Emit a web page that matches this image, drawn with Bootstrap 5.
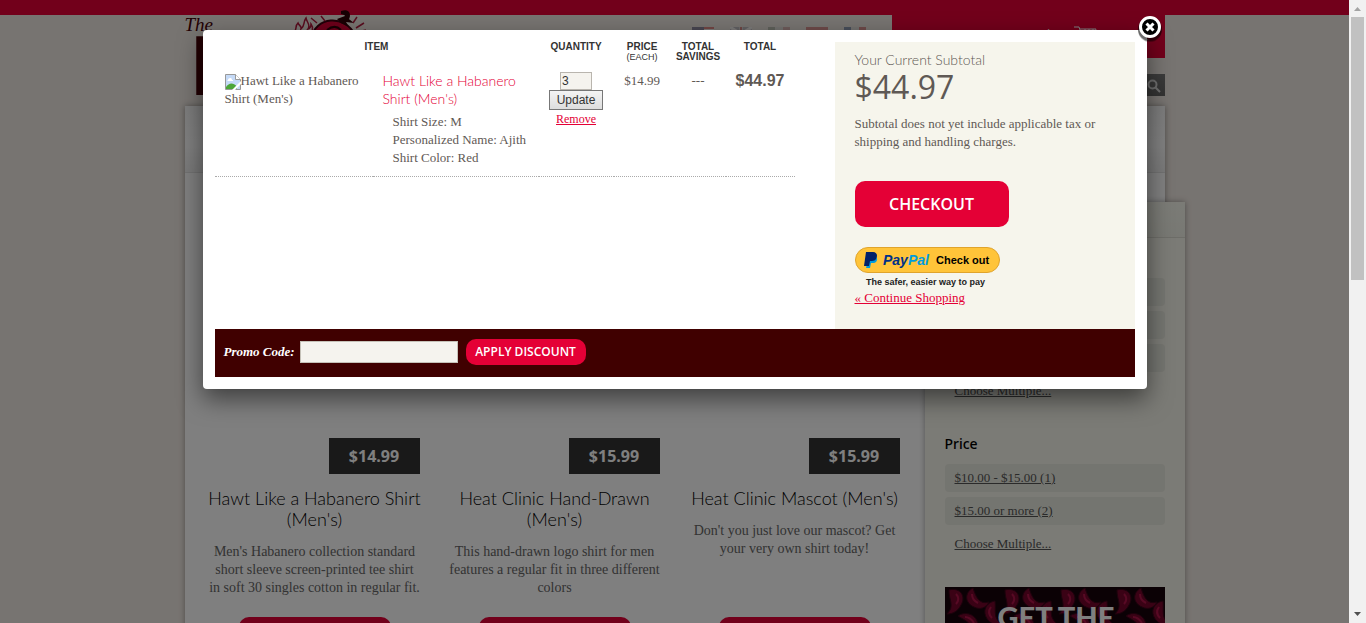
<!DOCTYPE html>
<html lang="en">
<head>
<meta charset="utf-8">
<meta name="viewport" content="width=device-width, initial-scale=1">
<title>The Heat Clinic - Cart</title>
<link href="https://cdn.jsdelivr.net/npm/bootstrap@5.3.0/dist/css/bootstrap.min.css" rel="stylesheet">
<script defer src="https://cdn.jsdelivr.net/npm/bootstrap@5.3.0/dist/js/bootstrap.bundle.min.js"></script>
<style>
:root{--red:#e40036;--serif:"Liberation Serif",serif;--sans:"Open Sans","Noto Sans",sans-serif;--light:Lato,"Open Sans",sans-serif;--arial:"Liberation Sans",sans-serif}
body{font:13px/18px var(--serif);color:#5f5955;background:#efeae5}
.viewport{height:100vh;overflow:hidden}
.site{min-width:0;overflow:hidden;position:relative;background:#efe8e2}
.topbar{height:15px;background:var(--red)}
.wrap{width:100%;max-width:980px;margin:0 auto}
/* header */
.masthead{height:91px}
.brand{color:#450006;text-decoration:none;position:relative;display:block;width:190px}
.brand-the{font:italic 19px/20px var(--serif);display:block}
.brand-heat{font:bold 86px/60px var(--arial);display:block;padding-left:6px}
.brand svg{position:absolute;left:106px;top:-6px}
.flags{gap:16px;padding:12px 26px 0 0}
.flags svg{opacity:.5}
.account{width:273px;height:43px;background:var(--red);font:15px/20px var(--sans);padding:8px 16px 14px}
.account a{color:#fff;text-decoration:none}
.find{margin-top:16px;width:273px;height:22px}
.find input{border:0;background:#f5f3ee;border-radius:0}
.find button{width:24px;height:22px;border:0;background:linear-gradient(#777,#666)}
/* page body */
.sheet{background:#fff;box-shadow:0 0 6px rgba(0,0,0,.35)}
.navband{height:67px;background:linear-gradient(#f8f8f8,#fff 60%,#f2f2f2);border-bottom:1px solid #e2e2e2}
.products{width:740px;padding:89px 0 0 10px}
.product{padding:0 10px;width:240px}
.thumb{height:176px}
.price-tag{background:#333;color:#fff;font:bold 16px/36px var(--sans);width:91px;height:36px;margin-right:5px;text-align:center}
.product h3{font:300 18px/21px var(--light);color:#000;margin:14px -5px 13px}
.product p{font-size:14px;color:#666;margin:0 4px 20px}
.buy{width:152px;height:38px;background:var(--red);border:0;border-radius:10px}
.side{width:260px;margin:29px -20px 0 0;background:#f6f7ed;box-shadow:0 0 6px rgba(0,0,0,.35);min-height:620px}
.side-head{height:36px;border-bottom:1px solid #dadbd0;background:linear-gradient(#f6f7ed,#f0f1e7)}
.side-body{padding:10px 20px}
.facet{margin-bottom:29px}
.facet h4{font:500 14px/20px "Noto Sans",var(--sans);color:#000;margin:0 0 10px;min-height:20px}
.facet li{height:28px;line-height:28px;margin-bottom:5px;padding-left:10px;border-radius:4px;background:#e9eae0}
.facet li:last-child{background:none;margin:0}
.facet a{color:#555}
.promo{display:block}
.veil{position:absolute;inset:0;background:rgba(0,0,0,.5)}
/* cart window */
.cart{position:absolute;inset:30px 0 auto;width:100%;max-width:944px;margin:0 auto;padding:12px;background:#fff;border-radius:4px;box-shadow:0 10px 25px rgba(0,0,0,.5)}
.cart-close{position:absolute;top:-18px;right:-21px;width:36px;height:36px;padding:0;border:0;background:none}
.cart a{color:var(--red)}
.cart-items{width:580px;table-layout:fixed;border-collapse:collapse;align-self:flex-start}
.cart-items th{font:bold 10px/10px var(--arial);color:#333;text-align:center;vertical-align:top;padding:0 0 8px;height:28px;text-transform:uppercase}
.cart-items th small{font:9px/10px var(--arial);display:block}
.cart-items td{vertical-align:top;padding:2px 0 9px;border-bottom:1px dotted #aaa;text-align:center}
.cart-items td.pic,.cart-items td.desc{text-align:left;padding-left:10px}
.cart-items .desc a{font:300 14px/18px var(--light);text-decoration:none;display:block}
.cart-items dl{margin:5px 0 0 10px}
.qty{width:32px;height:18px;border:1px solid #b9b5ae;background:#f5f3ee;font:12px/16px var(--arial);color:#333;padding:0 1px;display:block;margin:0 auto}
.upd{width:54px;height:20px;border:1px solid #777;background:linear-gradient(#f4f4f4,#ddd);font:12px/16px var(--arial);color:#333;padding:0;display:block;margin:0 auto}
.remove{font-size:12px}
.line-total{font:bold 16px/18px var(--arial)}
.summary{width:300px;height:287px;background:#f6f5ec;padding:9px 20px}
.summary h2{font:300 14px/18px var(--light);margin:0}
.sum{font:32px/36px var(--sans);margin:0 0 10px}
.checkout{width:154px;height:46px;border:0;border-radius:10px;background:var(--red);color:#fff;font:600 16px/46px var(--sans);padding:0;display:block;margin:30px 0 20px}
.paypal{display:block;border:0;background:none;padding:0;width:146px;height:42px}
.codebar{background:#400000;height:48px;padding:0 9px 2px}
.codebar label{font:italic bold 13px/18px var(--serif);color:#fff;width:76px}
.codebar input{width:158px;height:22px;border:1px solid #c5c1b8;border-radius:0;background:#f5f3ee;padding:0 4px}
.codebar button{width:120px;height:26px;border:0;border-radius:10px;background:var(--red);color:#fff;font:600 12px/26px var(--sans);padding:0;margin-left:8px}
/* scroll strip */
.scroller{width:17px;background:#f1f1f1;padding:0 2px}
.scroller i{display:block;flex:none;height:263px;background:#c1c1c1}
</style>
</head>
<body>
<div class="viewport d-flex">
<div class="site flex-grow-1">
  <div class="topbar"></div>
  <header class="wrap masthead d-flex">
    <a class="brand" href="#"><span class="brand-the">The</span><span class="brand-heat">H</span>
      <svg width="76" height="40" viewBox="0 0 76 40" fill="none" stroke="#b0183c" stroke-width="1.500"><path d="M20 30C24 7 54 5 64 26L66 40H16z" fill="#d80034" stroke="#400010" stroke-width="2"/><path d="M46 10l8-3 9 7-8-1 3 5-8-4z" fill="#300008" stroke="none"/><path d="M50 2c9-3 11 4 7 10l-5-1c3-4 3-5-2-6z" fill="#300008" stroke="none"/><path d="M36 21c5-4 10-4 14 0" stroke="#300008" stroke-width="2"/><path d="M4 22c2-4 0-5 3-8 1 3 4 3 3 6 4-3 2-7 5-11 1 5 5 7 2 11 3-1 3-3 3-5 3 4 1 8-1 12M20 9l6 5M30 7l4 5M66 8l-4 6M73 14l-8 5M75 21l-8 2"/></svg>
    </a>
    <div class="flags d-flex ms-auto">
      <svg width="22" height="14"><path fill="#fff" d="M0 0h22v14H0z"/><path stroke="#d33" stroke-width="2" d="M0 1h22M0 5h22M0 9h22M0 13h22"/><path fill="#336" d="M0 0h12v8H0z"/></svg>
      <svg width="22" height="14"><path fill="#99a" d="M0 0h22v14H0z"/><path stroke="#fff" stroke-width="3" d="M0 0l22 14M22 0L0 14M11 0v14M0 7h22"/><path stroke="#c33" stroke-width="2" d="M11 0v14M0 7h22"/></svg>
      <svg width="22" height="14"><path fill="#ddd" d="M0 0h22v14H0z"/><path fill="#8a9a8a" d="M0 0h7v14H0z"/><path fill="#c88" d="M15 0h7v14h-7z"/></svg>
      <svg width="22" height="14"><path fill="#c44" d="M0 0h22v14H0z"/><path fill="#ec5" d="M0 4h22v6H0z"/></svg>
      <svg width="22" height="14"><path fill="#ddd" d="M0 0h22v14H0z"/><path fill="#358" d="M0 0h7v14H0z"/><path fill="#c44" d="M15 0h7v14h-7z"/></svg>
    </div>
    <div>
      <div class="account d-flex align-items-center justify-content-between"><a href="#">Login</a><a href="#">Register</a><span class="text-white">|</span>
        <a href="#" aria-label="Cart"><svg width="24" height="18" viewBox="0 0 24 18" fill="none" stroke="#fff"><path d="M0 1h5l4 12h11M6 3h16l-2 7H8M11 3v7M15 3v7M19 3v7M6 6h15"/></svg></a><a href="#">Cart</a></div>
      <form class="find d-flex"><input class="flex-grow-1" type="search" aria-label="Search"><button type="button" aria-label="Search"><svg width="14" height="14" viewBox="0 0 14 14" fill="none" stroke="#ddd" stroke-width="2"><circle cx="5.5" cy="5.500" r="4"/><path d="M8.500 8.500L13 13"/></svg></button></form>
    </div>
  </header>
  <main class="wrap sheet">
    <div class="navband"></div>
    <div class="d-flex align-items-start">
      <section class="products d-flex">
        <article class="product d-flex flex-column text-center"><div class="thumb"></div><div class="price-tag ms-auto">$14.99</div><h3>Hawt Like a Habanero Shirt (Men's)</h3><p>Men's Habanero collection standard short sleeve screen-printed tee shirt in soft 30 singles cotton in regular fit.</p><button class="buy mt-auto mx-auto" type="button" aria-label="Buy"></button></article>
        <article class="product d-flex flex-column text-center"><div class="thumb"></div><div class="price-tag ms-auto">$15.99</div><h3>Heat Clinic Hand-Drawn (Men's)</h3><p>This hand-drawn logo shirt for men features a regular fit in three different colors</p><button class="buy mt-auto mx-auto" type="button" aria-label="Buy"></button></article>
        <article class="product d-flex flex-column text-center"><div class="thumb"></div><div class="price-tag ms-auto">$15.99</div><h3>Heat Clinic Mascot (Men's)</h3><p>Don't you just love our mascot? Get your very own shirt today!</p><button class="buy mt-auto mx-auto" type="button" aria-label="Buy"></button></article>
      </section>
      <aside class="side flex-shrink-0">
        <div class="side-head"></div>
        <div class="side-body">
          <div class="facet"><h4></h4><ul class="list-unstyled m-0"><li></li><li></li><li></li><li><a href="#">Choose Multiple...</a></li></ul></div>
          <div class="facet"><h4>Price</h4><ul class="list-unstyled m-0"><li><a href="#">$10.00 - $15.00 (1)</a></li><li><a href="#">$15.00 or more (2)</a></li><li><a href="#">Choose Multiple...</a></li></ul></div>
          <a class="promo" href="#"><svg width="220" height="120" viewBox="0 0 220 120"><defs><pattern id="chili" width="56" height="44" patternUnits="userSpaceOnUse"><path d="M0 0h56v44H0z" fill="#17020a"/><g fill="#74052b" stroke="#3a0216"><path d="M4 3c12-3 17 7 12 15-3 6-8 9-14 9 8-8 2-13 2-24z"/><path d="M28 1c-9 5-8 15 1 19 6 3 12 1 15-5-9 3-13-4-16-14z"/><path d="M50 14c-11 2-13 13-6 20 4 4 8 5 11 2-7-6-4-13-5-22z"/><path d="M13 29c7-5 16-2 19 5 2 5 0 9-5 10 0-8-6-10-14-15z"/></g><g fill="none" stroke="#b01348" stroke-width="2"><path d="M11 7c3 3 3 7 0 10M27 7c0 4 2 7 6 9M46 20c-3 4-2 8 1 11M20 30c4 0 7 3 9 6"/></g></pattern></defs><path d="M0 0h220v120H0z" fill="url(#chili)"/><text x="111" y="41" text-anchor="middle" font-family="Lato, sans-serif" font-weight="900" font-size="29" fill="#fff">GET THE</text></svg></a>
        </div>
      </aside>
    </div>
  </main>
  <div class="veil"></div>
  <section class="cart" role="dialog" aria-label="Cart">
    <button class="cart-close" type="button" aria-label="Close"><svg class="d-block" width="36" height="36" viewBox="0 0 36 36"><circle cx="18" cy="17" r="12" opacity=".4"/><circle cx="18" cy="18" r="12" opacity=".3"/><circle cx="18" cy="15" r="9.500" fill="#000" stroke="#fff" stroke-width="3"/><path d="M14.500 11.500l7 7M21.500 11.500l-7 7" stroke="#fff" stroke-width="3"/></svg></button>
    <div class="d-flex justify-content-between">
      <table class="cart-items">
        <colgroup><col style="width:158px"><col style="width:166px"><col style="width:75px"><col style="width:57px"><col style="width:55px"><col style="width:69px"></colgroup>
        <thead><tr><th colspan="2">Item</th><th>Quantity</th><th>Price<small>(each)</small></th><th>Total Savings</th><th>Total</th></tr></thead>
        <tbody><tr>
          <td class="pic"><svg width="16" height="16" viewBox="0 0 16 16" role="img" aria-label="Missing picture"><path d="M.5.5h10l5 5v10H.5z" fill="#c5daf7" stroke="#999"/><path d="M1 15v-2c3-4 7-5 11 0v2z" fill="#4ca638"/><path d="M3 6c0-2 4-3 4 0h1v1H2z" fill="#fff"/><path d="M10.500.5v5h5" fill="#fff" stroke="#999"/><path d="M7 16l9-9v3l-6 6z" fill="#fff"/></svg>Hawt Like a Habanero Shirt (Men's)</td>
          <td class="desc"><a href="#">Hawt Like a Habanero Shirt (Men's)</a><dl><div>Shirt Size: M</div><div>Personalized Name: Ajith</div><div>Shirt Color: Red</div></dl></td>
          <td><input class="qty" type="text" value="3" aria-label="Quantity"><button class="upd" type="button">Update</button><a class="remove" href="#">Remove</a></td>
          <td>$14.99</td><td>---</td><td class="line-total">$44.97</td>
        </tr></tbody>
      </table>
      <aside class="summary">
        <h2>Your Current Subtotal</h2>
        <p class="sum">$44.97</p>
        <p class="m-0">Subtotal does not yet include applicable tax or shipping and handling charges.</p>
        <button class="checkout" type="button">CHECKOUT</button>
        <button class="paypal" type="button" aria-label="Check out with PayPal"><svg class="d-block" width="146" height="42" viewBox="0 0 146 42" font-family="Liberation Sans, sans-serif" font-weight="bold"><rect x=".5" y=".5" width="144" height="25" rx="12.500" fill="#ffc439" stroke="#e0a42c"/><path d="M14 9h6c3 1 3 6-1 7h-3l-1 5h-4z" fill="#009cde"/><path d="M11 5h7c4 0 5 4 3 7-1 2-4 2-6 2l-1 5H9z" fill="#012169"/><g font-size="14" font-style="italic"><text x="28" y="18" fill="#003087">Pay<tspan fill="#009cde">Pal</tspan></text></g><text x="81" y="17" font-size="11" fill="#000">Check out</text><text x="11" y="38" font-size="9" fill="#222">The safer, easier way to pay</text></svg></button>
        <a href="#">« Continue Shopping</a>
      </aside>
    </div>
    <form class="codebar d-flex align-items-center"><label for="code">Promo Code:</label><input id="code" type="text"><button type="button">APPLY DISCOUNT</button></form>
  </section>
</div>
<div class="scroller d-flex flex-column flex-shrink-0" aria-hidden="true"><svg class="flex-shrink-0" width="13" height="17"><path d="M3 11l3.500-4 3.500 4z" fill="#a3a3a3"/></svg><i></i><svg class="mt-auto flex-shrink-0" width="13" height="17"><path d="M3 6l3.500 4L10 6z" fill="#505050"/></svg></div>
</div>
</body>
</html>
